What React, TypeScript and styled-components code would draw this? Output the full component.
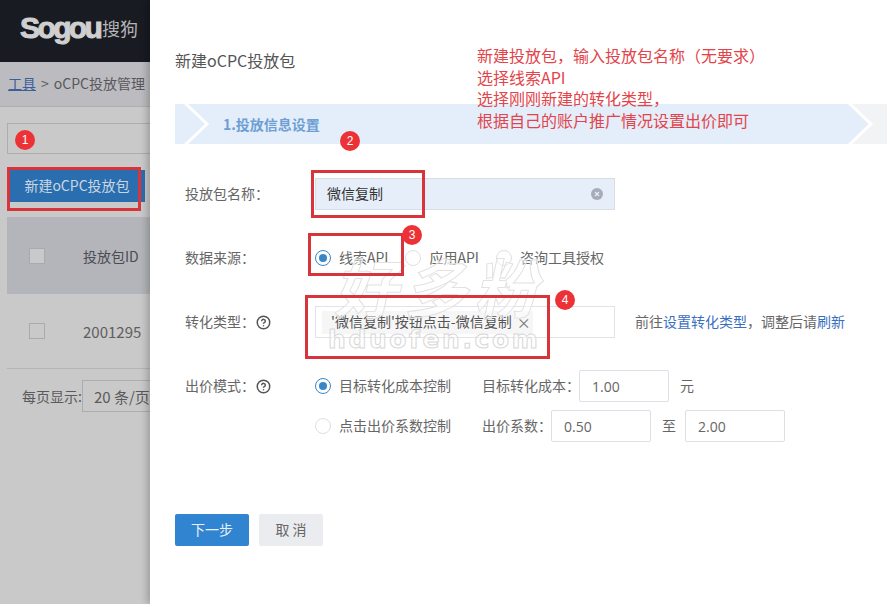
import * as React from "react";
import styled, { createGlobalStyle } from "styled-components";
import { CircleHelp } from "lucide-react";

const FONT = `"Noto Sans CJK SC", "Noto Sans", sans-serif`;

const Global = createGlobalStyle`
  html, body { margin: 0; padding: 0; background: #fff; }
  body { font-family: ${FONT}; font-size: 14px; color: #666; }
`;

const Page = styled.div`
  position: relative;
  display: flex;
  width: 887px;
  height: 604px;
  overflow: hidden;
`;

/* dimmed page behind the drawer */
const Behind = styled.div`
  width: 150px;
  flex: none;
  overflow: hidden;
  background: #c9c9c9;
  color: #5a5a5c;
`;

const Header = styled.div`
  height: 62px;
  display: flex;
  align-items: center;
  padding: 0 0 6px 20px;
  box-sizing: border-box;
  background: #191b22;
`;

const LogoWord = styled.span`
  font-family: "Liberation Sans", sans-serif;
  font-weight: 700;
  font-size: 30px;
  letter-spacing: -2.6px;
  color: #cfcfcf;
  -webkit-text-stroke: 1px #cfcfcf;
  width: 82px;
  flex: none;
  white-space: nowrap;
`;

const LogoCn = styled.span`
  font-size: 18px;
  line-height: 1;
  color: #b4b4b6;
  white-space: nowrap;
`;

const Crumb = styled.div`
  height: 45px;
  display: flex;
  align-items: center;
  gap: 5px;
  padding: 0 0 2px 8px;
  box-sizing: border-box;
  background: #bcbcc0;
  border-bottom: 1px solid #aeaeb0;
  white-space: nowrap;
  color: #58585c;
`;

const CrumbLink = styled.span`
  color: #3a5f9c;
  text-decoration: underline;
`;

const SearchBox = styled.div`
  height: 31px;
  margin: 16px 0 0 7px;
  box-sizing: border-box;
  border: 1px solid #adadad;
  border-right: none;
`;

const NewButton = styled.div`
  width: 136px;
  height: 32px;
  margin: 16px 0 0 9px;
  padding-bottom: 2px;
  display: flex;
  align-items: center;
  justify-content: center;
  box-sizing: border-box;
  background: #2a6eaf;
  color: #c9d7e4;
  white-space: nowrap;
`;

const TableHead = styled.div`
  height: 77px;
  margin: 15px 0 0 7px;
  display: flex;
  align-items: center;
  background: #b4b5ba;
  color: #4c4c50;
`;

const TableRow = styled.div`
  height: 75px;
  margin-left: 7px;
  display: flex;
  align-items: center;
  box-sizing: border-box;
  border-bottom: 1px solid #b5b5b5;
  color: #5e5e5e;
  font-size: 15px;
`;

const Check = styled.span<{ $fill: string }>`
  width: 16px;
  height: 16px;
  margin: 0 38px 0 22px;
  flex: none;
  box-sizing: border-box;
  border: 1px solid #aaaaaa;
  background: ${(p) => p.$fill};
`;

const Pager = styled.div`
  display: flex;
  align-items: center;
  margin: 11px 0 0 22px;
  white-space: nowrap;
`;

const PageSelect = styled.span`
  flex: none;
  width: 90px;
  height: 32px;
  display: flex;
  align-items: center;
  padding-left: 11px;
  box-sizing: border-box;
  border: 1px solid #adadad;
  font-size: 15px;
`;

/* drawer */
const Drawer = styled.div`
  position: relative;
  flex: 1;
  padding: 46px 0 0 25px;
  box-sizing: border-box;
  background: #fff;
  box-shadow: -3px 0 7px rgba(0, 0, 0, 0.22);
`;

const Title = styled.div`
  height: 30px;
  line-height: 28px;
  font-size: 16px;
  color: #555;
`;

const StepBar = styled.div`
  position: relative;
  height: 40px;
  margin-top: 28px;
  background: #f2f3f5;
`;

const StepFill = styled.div`
  height: 100%;
  width: 693px;
  display: flex;
  align-items: center;
  padding: 0 0 1px 48px;
  box-sizing: border-box;
  background: #e4edfa;
  clip-path: polygon(0 0, 673px 0, 693px 50%, 673px 100%, 0 100%);
  color: #6c9fd3;
  font-weight: 700;
`;

const Chevron = styled.svg<{ $left: number }>`
  position: absolute;
  top: 0;
  left: ${(p) => p.$left}px;
`;

const Form = styled.div`
  display: flex;
  flex-direction: column;
  gap: 32px;
  margin-top: 34px;
  padding-left: 10px;
`;

const Row = styled.div`
  display: flex;
  align-items: flex-start;
`;

const Label = styled.div`
  width: 130px;
  height: 32px;
  flex: none;
  display: flex;
  align-items: center;
  gap: 1px;
  color: #666;
`;

const Lifted = styled.span`
  padding-bottom: 3px;
`;

const Help = styled(CircleHelp)`
  color: #555;
`;

const NameInput = styled.div`
  width: 300px;
  height: 32px;
  display: flex;
  align-items: center;
  justify-content: space-between;
  padding: 0 11px 0 11px;
  box-sizing: border-box;
  background: #e6eefa;
  border: 1px solid #d8dde6;
  color: #333;
`;

const Options = styled.div`
  display: flex;
  align-items: center;
  gap: 17px;
  height: 32px;
`;

const Option = styled.div<{ $w?: number }>`
  display: flex;
  align-items: center;
  gap: 8px;
  white-space: nowrap;
  ${(p) => (p.$w ? `width: ${p.$w}px; flex: none;` : "")}
`;

const Radio = styled.span<{ $on?: boolean }>`
  width: 16px;
  height: 16px;
  flex: none;
  display: flex;
  align-items: center;
  justify-content: center;
  box-sizing: border-box;
  border-radius: 50%;
  border: 1px solid ${(p) => (p.$on ? "#3a87c8" : "#dcdfe6")};
  &::after {
    content: "";
    width: 8px;
    height: 8px;
    border-radius: 50%;
    background: ${(p) => (p.$on ? "#3a87c8" : "transparent")};
  }
`;

const TypeInput = styled.div`
  width: 300px;
  height: 32px;
  display: flex;
  align-items: center;
  flex: none;
  padding-left: 6px;
  box-sizing: border-box;
  border: 1px solid #e1e3e8;
`;

const Tag = styled.div`
  width: 211px;
  height: 23px;
  display: flex;
  align-items: center;
  gap: 5px;
  padding-left: 9px;
  box-sizing: border-box;
  background: #f6f6f7;
  color: #555;
  white-space: nowrap;
`;

const TagClose = styled.span`
  font-size: 14px;
  line-height: 1;
  color: #777;
`;

const Hint = styled.div`
  height: 32px;
  margin-left: 20px;
  display: flex;
  align-items: center;
  white-space: nowrap;
  color: #666;
`;

const HintLink = styled.span`
  color: #3a6fbf;
`;

const BidColumn = styled.div`
  display: flex;
  flex-direction: column;
  gap: 8px;
`;

const BidRow = styled.div`
  display: flex;
  align-items: center;
  height: 32px;
  white-space: nowrap;
`;

const NumberBox = styled.div<{ $w: number; $gap: number }>`
  width: ${(p) => p.$w}px;
  height: 32px;
  margin: 0 11px 0 ${(p) => p.$gap}px;
  display: flex;
  align-items: center;
  padding-left: 12px;
  box-sizing: border-box;
  border: 1px solid #dcdfe6;
  border-radius: 2px;
  font-family: "Open Sans", sans-serif;
  font-size: 14px;
  color: #666;
`;

const Actions = styled.div`
  display: flex;
  gap: 10px;
  margin-top: 72px;
`;

const Primary = styled.div`
  width: 74px;
  height: 32px;
  padding-bottom: 2px;
  display: flex;
  align-items: center;
  justify-content: center;
  box-sizing: border-box;
  border-radius: 2px;
  background: #3184d0;
  color: #e8f1fa;
`;

const Secondary = styled(Primary)`
  width: 64px;
  background: #ebecf0;
  color: #666;
`;

/* screenshot annotations on top of the page */
const Mark = styled.div<{ $x: number; $y: number; $w: number; $h: number }>`
  position: absolute;
  left: ${(p) => p.$x}px;
  top: ${(p) => p.$y}px;
  width: ${(p) => p.$w}px;
  height: ${(p) => p.$h}px;
  box-sizing: border-box;
  border: 3px solid #d7343c;
`;

const Badge = styled.div<{ $x: number; $y: number }>`
  position: absolute;
  left: ${(p) => p.$x - 10}px;
  top: ${(p) => p.$y - 10}px;
  width: 20px;
  height: 20px;
  display: flex;
  align-items: center;
  justify-content: center;
  border-radius: 50%;
  background: #ec3237;
  color: #fff;
  font-family: "Liberation Sans", sans-serif;
  font-size: 12px;
`;

const Note = styled.div`
  position: absolute;
  left: 477px;
  top: 45px;
  font-size: 16px;
  line-height: 21.6px;
  color: #e2444a;
  white-space: nowrap;
`;

const WatermarkCn = styled.div`
  position: absolute;
  left: 340px;
  top: 250px;
  font-size: 64px;
  line-height: 1.1;
  font-weight: 700;
  letter-spacing: 6px;
  color: rgba(255, 255, 255, 0.45);
  -webkit-text-stroke: 1px #e2e2e2;
  transform: skewX(-12deg);
  white-space: nowrap;
  pointer-events: none;
`;

const WatermarkEn = styled.div`
  position: absolute;
  left: 328px;
  top: 322px;
  font-family: "DejaVu Sans", sans-serif;
  font-weight: 700;
  font-size: 25px;
  line-height: 36px;
  letter-spacing: 2.6px;
  color: rgba(255, 255, 255, 0.45);
  -webkit-text-stroke: 1px #d8d8d8;
  white-space: nowrap;
  pointer-events: none;
`;

const ClearIcon = () => (
  <svg width="12" height="12" viewBox="0 0 12 12">
    <circle cx="6" cy="6" r="6" fill="#a6adb8" />
    <path d="M4 4l4 4M8 4l-4 4" stroke="#e6eefa" strokeWidth="1.2" />
  </svg>
);

const ChevronLine = ({ left, color }: { left: number; color: string }) => (
  <Chevron $left={left} width="30" height="40" viewBox="0 0 30 40">
    <path d="M2 -1L24 20L2 41" fill="none" stroke={color} strokeWidth="3" />
  </Chevron>
);

const App: React.FC = () => {
  return (
    <Page>
      <Global />
      <Behind>
        <Header>
          <LogoWord>Sogou</LogoWord>
          <LogoCn>搜狗</LogoCn>
        </Header>
        <Crumb>
          <CrumbLink>工具</CrumbLink>
          <span>&gt;</span>
          <span>oCPC投放管理</span>
        </Crumb>
        <SearchBox />
        <NewButton>新建oCPC投放包</NewButton>
        <TableHead>
          <Check $fill="#c8c9cc" />
          投放包ID
        </TableHead>
        <TableRow>
          <Check $fill="transparent" />
          2001295
        </TableRow>
        <Pager>
          每页显示:
          <PageSelect>20 条/页</PageSelect>
        </Pager>
      </Behind>

      <Drawer>
        <Title>新建oCPC投放包</Title>
        <StepBar>
          <StepFill>1.投放信息设置</StepFill>
          <ChevronLine left={8} color="#ffffff" />
          <ChevronLine left={672} color="#ffffff" />
        </StepBar>

        <Form>
          <Row>
            <Label>
              <Lifted>投放包名称：</Lifted>
            </Label>
            <NameInput>
              <Lifted>微信复制</Lifted>
              <ClearIcon />
            </NameInput>
          </Row>
          <Row>
            <Label>
              <Lifted>数据来源：</Lifted>
            </Label>
            <Options>
              <Option>
                <Radio $on />
                <Lifted>线索API</Lifted>
              </Option>
              <Option>
                <Radio />
                <Lifted>应用API</Lifted>
              </Option>
              <Option>
                <Radio />
                <Lifted>咨询工具授权</Lifted>
              </Option>
            </Options>
          </Row>
          <Row>
            <Label>
              <Lifted>转化类型：</Lifted>
              <Help size={15} strokeWidth={2.4} />
            </Label>
            <TypeInput>
              <Tag>
                <Lifted>'微信复制'按钮点击-微信复制</Lifted>
                <TagClose>×</TagClose>
              </Tag>
            </TypeInput>
            <Hint>
              <Lifted>
                前往<HintLink>设置转化类型</HintLink>，调整后请<HintLink>刷新</HintLink>
              </Lifted>
            </Hint>
          </Row>
          <Row>
            <Label>
              <Lifted>出价模式：</Lifted>
              <Help size={15} strokeWidth={2.4} />
            </Label>
            <BidColumn>
              <BidRow>
                <Option $w={167}>
                  <Radio $on />
                  <Lifted>目标转化成本控制</Lifted>
                </Option>
                <Lifted>目标转化成本：</Lifted>
                <NumberBox $w={90} $gap={-1}>1.00</NumberBox>
                <Lifted>元</Lifted>
              </BidRow>
              <BidRow>
                <Option $w={167}>
                  <Radio />
                  <Lifted>点击出价系数控制</Lifted>
                </Option>
                <Lifted>出价系数：</Lifted>
                <NumberBox $w={100} $gap={-1}>0.50</NumberBox>
                <Lifted>至</Lifted>
                <NumberBox $w={100} $gap={9}>2.00</NumberBox>
              </BidRow>
            </BidColumn>
          </Row>
        </Form>

        <Actions>
          <Primary>下一步</Primary>
          <Secondary>取 消</Secondary>
        </Actions>
      </Drawer>

      <WatermarkCn>好多粉</WatermarkCn>
      <WatermarkEn>hduofen.com</WatermarkEn>

      <Mark $x={7} $y={167} $w={134} $h={44} />
      <Mark $x={311} $y={170} $w={114} $h={48} />
      <Mark $x={308} $y={233} $w={96} $h={43} />
      <Mark $x={305} $y={295} $w={245} $h={64} />
      <Badge $x={25} $y={140}>1</Badge>
      <Badge $x={350} $y={141}>2</Badge>
      <Badge $x={412} $y={235}>3</Badge>
      <Badge $x={565} $y={300}>4</Badge>

      <Note>
        新建投放包，输入投放包名称（无要求）
        <br />
        选择线索API
        <br />
        选择刚刚新建的转化类型，
        <br />
        根据自己的账户推广情况设置出价即可
      </Note>
    </Page>
  );
};

export default App;
